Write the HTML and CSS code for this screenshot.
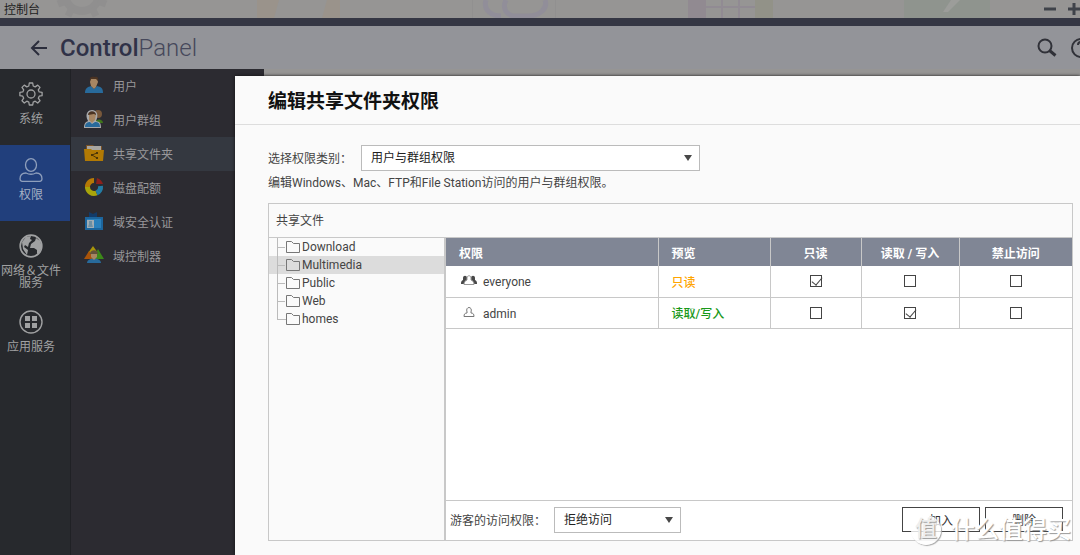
FILE: index.html
```html
<!DOCTYPE html>
<html lang="zh-CN">
<head>
<meta charset="utf-8">
<title>控制台</title>
<link rel="stylesheet" href="styles.css">
</head>
<body>
<div class="app">
  <div class="titlebar">
    <svg class="desktop" width="1080" height="18" viewBox="0 0 1080 18" aria-hidden="true">
      <g opacity=".45"><path fill="none" stroke="#898989" stroke-width="8" d="M65 -6a17 17 0 0 0 34 0"/><path stroke="#898989" stroke-width="7" d="M58 4l8-3M98 1l8 3M68 16l4-8M92 8l4 8"/></g>
      <path fill="#a0917d" opacity=".4" d="M257 0h22l-5 18h-17zM327 0h13v18h-18z"/>
      <path fill="none" stroke="#8f8b9b" stroke-width="5" opacity=".7" d="M486 0c-3 10 5 16 15 16M506 0c-4 8 0 16 10 16h12c12 0 20-8 17-16"/>
      <path stroke="#8b8b8b" d="M472.500 0v18M555.500 0v18" opacity=".4"/>
      <path fill="#8e8390" opacity=".6" d="M688 0h18v18h-18z"/><path fill="#8f9180" opacity=".6" d="M755 0h18v18h-18z"/>
      <path stroke="#8f8793" stroke-width="2" opacity=".7" d="M706 7h49M722 0v18M739 0v18"/>
      <path fill="#8b948a" opacity=".6" d="M904 0h86v18h-86z"/><path fill="#9c9d9a" d="M951 0h9l-12 12h-5z"/>
    </svg>
    <span class="titlebar-name">控制台</span>
    <button class="window-btn" aria-label="最小化"><svg width="12" height="12"><path stroke="#3f434a" stroke-width="3" d="M0 6h12"/></svg></button>
    <button class="window-btn" aria-label="最大化"><svg width="12" height="12"><path stroke="#3f434a" stroke-width="3" d="M0 6h12M6 0v12"/></svg></button>
  </div>
  <header class="header">
    <button class="back" aria-label="返回"><svg width="18" height="16" viewBox="0 0 18 16" fill="none" stroke="#2b2d3c" stroke-width="2"><path d="M17 8H2M9 1L2 8l7 7"/></svg></button>
    <h1 class="brand">Control<span>Panel</span></h1>
    <button class="tool" aria-label="搜索"><svg width="20" height="20" viewBox="0 0 20 20" fill="none" stroke="#303138"><circle cx="8" cy="8" r="6.500" stroke-width="2"/><path stroke-width="3" d="M12.500 12.500l6 5"/></svg></button>
    <button class="tool tool-help" aria-label="帮助"><svg width="20" height="20" viewBox="0 0 20 20" fill="none" stroke="#303138" stroke-width="2"><circle cx="10" cy="10" r="9"/><path d="M7 7c0-4 6-4 6 0 0 2-3 2-3 5M10 14v2"/></svg></button>
  </header>
  <div class="workspace">
    <nav class="rail">
      <a class="rail-item" href="#system"><svg width="24" height="24" viewBox="0 0 24 24" fill="none" stroke="#a0a1a2" stroke-width="1.300"><circle cx="12" cy="12" r="4"/><path stroke-linejoin="round" d="M10.300 1h3.400l.5 3 2 .9 2.500-1.800 2.300 2.300-1.700 2.500.9 2 2.900.4v3.400l-2.900.5-.9 2 1.700 2.500-2.300 2.300-2.500-1.800-2 .9-.5 2.900h-3.400l-.5-2.900-2-.9-2.500 1.800-2.300-2.300 1.700-2.500-.9-2-2.900-.5v-3.400l2.900-.4.9-2L3 5.400l2.300-2.300 2.500 1.800 2-.9z"/></svg>系统</a>
      <a class="rail-item is-active" href="#privilege"><svg width="24" height="24" viewBox="0 0 24 24" fill="none" stroke="#8f9fbc" stroke-width="1.300"><ellipse cx="12" cy="7" rx="5.500" ry="6.300"/><path d="M7 15c-4 0-6 2-6 6 0 2 1 2.400 2.500 2.400h17c1.500 0 2.500-.4 2.500-2.400 0-4-2-6-6-6-3 1.500-7 1.500-10 0z"/></svg>权限</a>
      <a class="rail-item" href="#network"><svg width="24" height="24" viewBox="0 0 24 24"><circle cx="12" cy="12" r="10.800" fill="none" stroke="#a0a1a2" stroke-width="1.700"/><path fill="#a0a1a2" d="M3 8l4-5 5-1-1 3 2 1-3 3-1 4-3-2-1 2 4 3-1 5-4-6zM12 10l4-3 1-3 4 3 2 6-3 6-2 1 0-4-3-2-4 0z"/></svg>网络＆文件<br>服务</a>
      <a class="rail-item" href="#apps"><svg width="24" height="24" viewBox="0 0 24 24"><circle cx="12" cy="12" r="11" fill="none" stroke="#a0a1a2" stroke-width="1.400"/><path fill="#a0a1a2" d="M6 6h5v5H6zM13 6h5v5h-5zM6 13h5v5H6zM13 13h5v5h-5z"/></svg>应用服务</a>
    </nav>
    <nav class="submenu">
      <a class="sub-item" href="#users"><svg width="20" height="20" viewBox="0 0 20 20"><path fill="#286a9b" d="M1 18c0-5 3-6 6-7l3 3 3-3c4 1 6 2 6 7z"/><path fill="#a78663" d="M7 3h6l1 4-2 5-2 2-3-3-1-4z"/><path fill="#4b3322" d="M6 6c-1-4 2-5 5-4 2-1 4 1 3 4l-2-2-5 0z"/></svg>用户</a>
      <a class="sub-item" href="#groups"><svg width="20" height="20" viewBox="0 0 20 20"><path fill="#3f761b" d="M11 14c1-5 8-4 8 0z"/><circle cx="14" cy="5" r="4" fill="#78583b"/><path fill="#a9aaac" d="M0 19c0-5 2-6 4-7C0 4 5 1 8 1c5 0 7 5 4 11 4 1 5 2 5 7z"/><path fill="#286a9b" d="M1 18c0-4 3-5 5-5l2 2 3-2c3 0 5 1 5 5z"/><path fill="#a78663" d="M5 5h7l-1 6-3 3-3-3z"/><path fill="#4b3322" d="M4 6c0-5 8-5 8 0l-2-1z"/></svg>用户群组</a>
      <a class="sub-item is-active" href="#shared"><svg width="20" height="20" viewBox="0 0 20 20"><path fill="#795126" d="M2 2h7l1 1h8v9H2z"/><path fill="#a9a7a1" d="M3 3h14v8H3z"/><path fill="#b27a04" d="M0 6h7l1 1h12l-1 11H1z"/><path stroke="#4d3607" fill="none" d="M13 10l-5 2 5 3"/><path fill="#4d3607" d="M12 9h2v2h-2zM7 11h2v2H7zM12 14h2v2h-2z"/></svg>共享文件夹</a>
      <a class="sub-item" href="#quota"><svg width="20" height="20" viewBox="0 0 20 20" fill="none" stroke-width="5"><path stroke="#b67906" d="M3.500 11A6.500 6.500 0 0 1 10 3.500"/><path stroke="#a8a50b" d="M3.500 10a6.500 6.500 0 0 0 9 6"/><path stroke="#237ca5" d="M12.500 16a6.500 6.500 0 0 0 4-7"/><path fill="#8c201c" d="M12 7l1-6c3 1 5 3 6 6z"/></svg>磁盘配额</a>
      <a class="sub-item" href="#security"><svg width="20" height="20" viewBox="0 0 20 20"><path fill="#123b69" d="M5 1l4 2 4-2v6H5z"/><path fill="#1c659d" d="M1 6h18v13H1z"/><path fill="#2a80bc" d="M3 8h14v9H3z"/><path fill="#a2adb4" d="M3 9h7v8H3z"/><path fill="#6d8fa3" d="M5 10h3v3l1 3H4l1-3z"/></svg>域安全认证</a>
      <a class="sub-item" href="#controller"><svg width="20" height="20" viewBox="0 0 20 20"><path fill="#a9950b" d="M9 1l5 7H4z"/><path fill="#a95309" d="M5 6l5 8H0z"/><path fill="#3c8819" d="M14 4l6 10H9z"/><path fill="#286a9b" d="M3 18c0-6 14-6 14 0z"/><path fill="#a78663" d="M7 8h6v4l-3 3-3-3z"/><path fill="#63513b" d="M6 9c0-5 8-5 8 0z"/></svg>域控制器</a>
    </nav>
  </div>

  <main class="dialog" role="dialog" aria-labelledby="dialog-title">
    <h2 class="dialog-title" id="dialog-title">编辑共享文件夹权限</h2>
    <div class="dialog-body">
      <div class="field">
        <label class="field-label" for="type">选择权限类别：</label>
        <span class="select type-select"><select id="type"><option>用户与群组权限</option></select></span>
      </div>
      <p class="hint">编辑Windows、Mac、FTP和File Station访问的用户与群组权限。</p>
      <section class="panel">
        <h3 class="panel-title">共享文件</h3>
        <div class="panel-body">
          <ul class="tree">
            <li><a href="#d"><svg width="14" height="12"><use href="#folder"/></svg>Download</a></li>
            <li class="is-selected"><a href="#m"><svg width="14" height="12"><use href="#folder"/></svg>Multimedia</a></li>
            <li><a href="#p"><svg width="14" height="12"><use href="#folder"/></svg>Public</a></li>
            <li><a href="#w"><svg width="14" height="12"><use href="#folder"/></svg>Web</a></li>
            <li><a href="#h"><svg width="14" height="12"><use href="#folder"/></svg>homes</a></li>
          </ul>
          <div class="rights">
            <table class="grid">
              <colgroup><col class="c-name"><col class="c-preview"><col class="c-ro"><col class="c-rw"><col class="c-deny"></colgroup>
              <thead><tr><th>权限</th><th>预览</th><th>只读</th><th>读取 / 写入</th><th>禁止访问</th></tr></thead>
              <tbody>
                <tr><td><span class="who"><svg width="16" height="12" viewBox="0 0 16 12"><path fill="#484848" d="M2 3c0-3 4-3 4 0v2l-1 4H0c0-2 0-3 2-4zM10 3c0-3 4-3 4 0v2c2 1 2 2 2 4h-5l-1-4z"/><path fill="#fff" stroke="#999" d="M6 3c0-3 4-3 4 0v2c2 1 3 2 3 4.500H3C3 7 4 6 6 5z"/></svg>everyone</span></td><td class="ro">只读</td>
                  <td><input type="checkbox" aria-label="everyone 只读" checked></td><td><input type="checkbox" aria-label="everyone 读取/写入"></td><td><input type="checkbox" aria-label="everyone 禁止访问"></td></tr>
                <tr><td><span class="who"><svg width="16" height="12" viewBox="0 0 16 12"><path fill="none" stroke="#777" d="M6 5c-2-6 6-6 4 0v1c2 0 3 1 3 3.500H3C3 7 4 6 6 6z"/></svg>admin</span></td><td class="rw">读取/写入</td>
                  <td><input type="checkbox" aria-label="admin 只读"></td><td><input type="checkbox" aria-label="admin 读取/写入" checked></td><td><input type="checkbox" aria-label="admin 禁止访问"></td></tr>
              </tbody>
            </table>
            <div class="panel-footer">
              <label class="guest-label" for="guest">游客的访问权限：</label>
              <span class="select guest-select"><select id="guest"><option>拒绝访问</option></select></span>
              <div class="actions"><button class="btn">加入</button><button class="btn">删除</button></div>
            </div>
          </div>
        </div>
      </section>
    </div>
  </main>
  <div class="watermark"><span class="mark">值</span><span>什么值得买</span></div>
</div>
<svg class="symbols" aria-hidden="true"><symbol id="folder" viewBox="0 0 14 12"><path fill="none" stroke="#777" d="M.5 .5h5l2 2h6v9H.5z"/></symbol></svg>
</body>
</html>
```
FILE: styles.css
```css
* { box-sizing: border-box; }
body, h1, h2, h3, p, ul { margin: 0; padding: 0; }
body, button, select {
  font-family: Roboto, "Noto Sans CJK SC", sans-serif;
  font-size: 12px;
}
body { color: #444; background: #969594; }
a { color: inherit; text-decoration: none; }
button { padding: 0; border: 0; background: none; }
svg { display: block; flex: none; }
.symbols { display: none; }

.app {
  position: relative;
  display: flex;
  flex-direction: column;
  min-height: 100vh;
  overflow: hidden;
}

.titlebar {
  position: relative;
  display: flex;
  align-items: center;
  gap: 12px;
  height: 18px;
  padding-left: 4px;
}
.desktop { position: absolute; left: 0; top: 0; }
.titlebar-name { position: relative; margin-right: auto; padding-bottom: 2px; color: #1d1d1d; }
.window-btn { position: relative; }

.header {
  display: flex;
  align-items: center;
  height: 51px;
  padding-left: 30px;
  border-top: 8px solid #353744;
  background: #939499;
}
.back { margin-right: 12px; }
.brand { margin-right: auto; color: #303248; font-size: 24px; font-weight: 500; line-height: 28px; }
.brand span { color: #46485b; font-weight: 300; }
.tool { margin-right: 14px; }
.tool-help { margin-right: -11px; }

.workspace { display: flex; flex: 1; }
.rail { width: 71px; border-right: 1px solid #202125; background: #27292d; }
.rail-item {
  display: flex;
  flex-direction: column;
  align-items: center;
  height: 76px;
  padding: 13px 8px 0 0;
  color: #a0a1a2;
  line-height: 12px;
  text-align: center;
  white-space: nowrap;
}
.rail-item svg { margin-bottom: 7px; }
.rail-item.is-active { background: #213f7c; color: #a5b0c4; }

.submenu { width: 193px; background: #2c2b31; }
.sub-item {
  display: flex;
  align-items: center;
  gap: 9px;
  height: 34px;
  padding: 0 0 2px 13px;
  color: #98979a;
}
.sub-item.is-active { background: #343840; }

.dialog {
  position: absolute;
  inset: 76px 0 0 235px;
  display: flex;
  flex-direction: column;
  background: #fafafa;
  box-shadow: 0 0 3px #111;
}
.dialog-title {
  padding: 12px 33px 8px;
  border-bottom: 1px solid #ddd;
  color: #111;
  font-size: 19px;
  font-weight: 700;
  line-height: 28px;
}
.dialog-body {
  display: flex;
  flex: 1;
  flex-direction: column;
  padding: 20px 7px 14px 33px;
}
.field { display: flex; align-items: center; }
.field-label { width: 93px; padding-bottom: 2px; }
.select { position: relative; display: block; }
.select::after {
  content: "";
  position: absolute;
  right: 8px;
  top: 10px;
  border: 4px solid transparent;
  border-top: 6px solid #484848;
  border-bottom: 0;
  pointer-events: none;
}
.select select {
  appearance: none;
  display: block;
  width: 100%;
  height: 26px;
  padding: 0 9px;
  border: 1px solid #bbb;
  border-radius: 0;
  background: #fff;
  color: #222;
}
.type-select { width: 339px; }
.guest-select { width: 127px; }
.hint { padding-top: 2px; margin-bottom: 10px; line-height: 20px; }

.panel {
  display: flex;
  flex: 1;
  flex-direction: column;
  border: 1px solid #c8c8c8;
}
.panel-title {
  padding: 1px 7px 0;
  border-bottom: 1px solid #c8c8c8;
  font-size: 12px;
  font-weight: 400;
  line-height: 32px;
}
.panel-body { display: flex; flex: 1; }

.tree {
  display: grid;
  grid-auto-rows: 1fr;
  width: 175px;
  height: 88px;
  list-style: none;
}
.tree li { position: relative; padding-left: 17px; }
.tree li::before {
  content: "";
  position: absolute;
  left: 8px;
  top: 0;
  width: 8px;
  height: 50%;
  border: solid #bbb;
  border-width: 0 0 1px 1px;
}
.tree li:not(:last-child)::before { border-left-width: 0; }
.tree li:not(:last-child)::after {
  content: "";
  position: absolute;
  left: 8px;
  top: 0;
  bottom: 0;
  border-left: 1px solid #bbb;
}
.tree .is-selected { background: #dcdcdc; }
.tree a { display: flex; align-items: center; gap: 2px; height: 100%; line-height: 18px; }

.rights {
  display: flex;
  flex: 1;
  flex-direction: column;
  border-left: 2px solid #c8c8c8;
  background: #fff;
}
.grid { width: 100%; border-collapse: collapse; table-layout: fixed; }
.c-preview { width: 112px; }
.c-ro { width: 91px; }
.c-rw { width: 98px; }
.c-deny { width: 113px; }
.grid th, .grid td { height: 31px; padding: 0; border-right: 1px solid #c8c8c8; text-align: center; }
.grid th { height: 28px; background: #808695; color: #fff; font-weight: 700; }
.grid td { border-bottom: 1px solid #c8c8c8; }
.grid th:nth-child(-n+2), .grid td:nth-child(-n+2) { padding-left: 13px; text-align: left; }
.grid th:last-child, .grid td:last-child { border-right: 0; }
.who { display: flex; align-items: center; gap: 6px; padding: 2px 0 0 2px; }
.who svg { margin-bottom: 2px; }
.grid .ro { color: #ffa500; font-weight: 500; }
.grid .rw { color: #1a991a; font-weight: 500; }
.grid input {
  appearance: none;
  display: block;
  width: 12px;
  height: 12px;
  margin: 0 auto;
  border: 1px solid #444;
  background: #fff;
}
.grid input:checked::before {
  content: "";
  display: block;
  width: 5px;
  height: 9px;
  margin: -1px 0 0 3px;
  border: solid #444;
  border-width: 0 1px 1px 0;
  transform: rotate(40deg);
}

.panel-footer {
  display: flex;
  align-items: center;
  height: 40px;
  margin-top: auto;
  padding: 0 9px 2px 4px;
  border-top: 1px solid #c8c8c8;
}
.guest-label { width: 104px; white-space: nowrap; }
.actions { display: flex; gap: 5px; margin-left: auto; }
.btn { width: 78px; height: 25px; border: 1px solid #444; background: #fff; color: #333; }

.watermark {
  position: absolute;
  right: 9px;
  bottom: 9px;
  display: flex;
  align-items: center;
  gap: 10px;
  color: #fff;
  font-size: 24px;
  font-weight: 500;
  line-height: 32px;
  text-shadow: 1px 1px 1px #999;
  pointer-events: none;
}
.mark {
  width: 30px;
  height: 30px;
  border-radius: 50%;
  background: #fffc;
  box-shadow: 1px 1px 1px #aaa;
  color: #eee;
  font-size: 22px;
  line-height: 28px;
  text-align: center;
}
```
